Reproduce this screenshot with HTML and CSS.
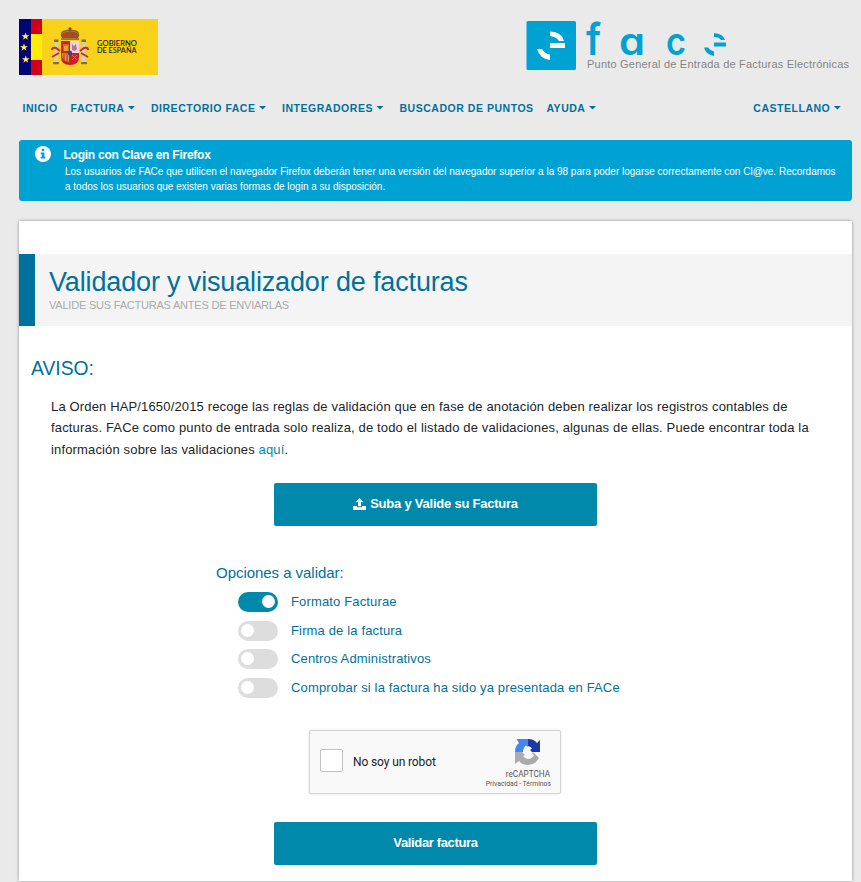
FILE: index.html
```html
<!DOCTYPE html>
<html lang="es">
<head>
<meta charset="utf-8">
<title>FACe - Validador y visualizador de facturas</title>
<link rel="stylesheet" href="styles.css">
</head>
<body>
<header class="brand">
  <svg class="gob" width="139" height="56" viewBox="0 0 139 56" role="img" aria-label="Gobierno de España">
    <rect width="139" height="56" fill="#f8d21a"/>
    <rect width="12" height="56" fill="#030372"/>
    <rect x="12" width="11" height="56" fill="#d00018"/>
    <rect x="12" y="15" width="11" height="26" fill="#ffee00"/>
    <g fill="#fff04a">
      <path id="star" d="M6.500 13.500l1 2.700h2.900l-2.300 1.700.8 2.900-2.400-1.700-2.400 1.700.8-2.900-2.300-1.700h2.900z"/>
      <use href="#star" x="-1.500" y="11"/>
      <use href="#star" x=".3" y="23"/>
    </g>
    <g>
      <path d="M43 20q-2-6 3-7l5-1 5 1q5 1 3 7z" fill="#b9402c"/>
      <path d="M43 18q-2-5 3-6l5-1 5 1q5 1 3 6M51 11v8M47 12v6M55 12v6" fill="none" stroke="#806319" stroke-width="1.300"/>
      <path d="M51 8v4M49.500 9.500h3" stroke="#76351f"/>
      <path d="M42 19h18v2H42z" fill="#a3792b"/>
      <path d="M42 22h18v16q0 8-9 8t-9-8z" fill="#c9202e"/>
      <path d="M51 22h9v12h-9z" fill="#eed9d2"/>
      <path d="M53 25l2 2 2-2 1 5-2 2-3-1z" fill="#ba719b"/>
      <path d="M44.500 25h1v2h1v-2h1v2h1v-2h1v7h-5z" fill="#e4a42b"/>
      <path d="M43 34h7v9q-7-1-7-7z" fill="#d6a12e"/>
      <path d="M45 34v8M48 34v9" stroke="#be2431"/>
      <path d="M53 36l5 5M58 36l-5 5" stroke="#c58423"/>
      <ellipse cx="51" cy="34" rx="2.200" ry="2.600" fill="#324989"/>
      <path d="M35.500 23h3.500v21h-3.500zM63 23h3.500v21H63z" fill="#d3cfc0"/>
      <path d="M35 20.500h4.500v2.500H35zM62.500 20.500H67v2.500h-4.500zM34 43h6v2.200h-6zM62 43h6v2.200h-6z" fill="#897025"/>
      <path d="M33 31q0-3 4-2l4 3M33 38l7-4M69 31q0-3-4-2l-4 3M69 38l-7-4" fill="none" stroke="#c52a32" stroke-width="2"/>
    </g>
    <g class="gob-text"><text x="78" y="27.300" textLength="40" lengthAdjust="spacingAndGlyphs">GOBIERNO</text><text x="78" y="34.300" textLength="39.500" lengthAdjust="spacingAndGlyphs">DE ESPAÑA</text></g>
  </svg>
  <svg class="face" width="326" height="54" viewBox="0 0 326 54" role="img" aria-label="FACe">
    <rect x=".5" y="1" width="49.500" height="49" rx="1.500" fill="#00a2d4"/>
    <path d="M24 11.500q12 .5 14 9.500h-5q-2-4-9-5zM24 23h15v5H24zM11 29h5q3 5 8 5.500v5.500q-10-1-13-11z" fill="#fff"/>
    <g class="face-letters">
      <text x="60" y="35" font-size="43" textLength="15" lengthAdjust="spacingAndGlyphs">f</text>
      <text x="93" y="35" font-size="38" textLength="26" lengthAdjust="spacingAndGlyphs">a</text>
      <text x="140" y="35" font-size="38" textLength="20" lengthAdjust="spacingAndGlyphs">c</text>
    </g>
    <path d="M188 13q9 .5 11 7h-4q-2-3-7-3zM188 22.500h12v4H188zM178 27.500h4q2 3 6 4v4.500q-8-1-10-8.500z" fill="#00a2d4"/>
    <text class="face-tag" x="61" y="48" textLength="262">Punto General de Entrada de Facturas Electrónicas</text>
  </svg>
</header>
<nav class="nav">
  <a>INICIO</a><a class="drop">FACTURA</a><a class="drop">DIRECTORIO FACE</a><a class="drop">INTEGRADORES</a><a>BUSCADOR DE PUNTOS</a><a class="drop">AYUDA</a><a class="drop lang">CASTELLANO</a>
</nav>
<section class="notice">
  <svg width="16" height="16" viewBox="0 0 16 16"><circle cx="8" cy="8" r="8" fill="#fff"/><path d="M6.700 2.800h2.600v2.500H6.700zM5.700 6.500h3.700v4.300h1.100v1.700H5.600v-1.700h1.200V8.200H5.700z" fill="#00a2d4"/></svg>
  <div>
    <h2>Login con Clave en Firefox</h2>
    <p>Los usuarios de FACe que utilicen el navegador Firefox deberán tener una versión del navegador superior a la 98 para poder logarse correctamente con Cl@ve. Recordamos<br>a todos los usuarios que existen varias formas de login a su disposición.</p>
  </div>
</section>
<main class="card">
  <div class="title">
    <h1>Validador y visualizador de facturas</h1>
    <p>VALIDE SUS FACTURAS ANTES DE ENVIARLAS</p>
  </div>
  <h3>AVISO:</h3>
  <p class="text">La Orden HAP/1650/2015 recoge las reglas de validación que en fase de anotación deben realizar los registros contables de<br>facturas. FACe como punto de entrada solo realiza, de todo el listado de validaciones, algunas de ellas. Puede encontrar toda la<br>información sobre las validaciones <a>aquí</a>.</p>
  <button class="btn"><svg width="13" height="12" viewBox="0 0 13 12" fill="#fff"><path d="M6.500 0l4 4.200H8v4H5v-4H2.500zM0 8h4v1.200h5V8h4v4H0z"/></svg>Suba y Valide su Factura</button>
  <section class="options">
    <h4>Opciones a validar:</h4>
    <label><i class="switch on"></i>Formato Facturae</label>
    <label><i class="switch"></i>Firma de la factura</label>
    <label><i class="switch"></i>Centros Administrativos</label>
    <label><i class="switch"></i>Comprobar si la factura ha sido ya presentada en FACe</label>
  </section>
  <div class="captcha">
    <span class="box"></span>
    <span class="robot">No soy un robot</span>
    <div class="rc">
      <svg width="26" height="26" viewBox="0 0 26 26">
        <path d="M25 1v12h-8l-2-2 2-1.500Q16 7.500 13 7V0q6 0 9 4z" fill="#1c3aa9"/>
        <path d="M13 0v8l-2-1.500Q8 9 8 13H0q0-6 4-9L1.500 0z" fill="#4285f4"/>
        <path d="M0 13h7l3 3-2 1q2 3 5 3 4 0 6-4l-2-1.500 1-1.500 6 6q-4 7-11 7-6 0-9-4l-4 3z" fill="#ababab"/>
      </svg>
      <b>reCAPTCHA</b>
      <small>Privacidad - Términos</small>
    </div>
  </div>
  <button class="btn send">Validar factura</button>
</main>
</body>
</html>
```
FILE: styles.css
```css
* { box-sizing: border-box; margin: 0; padding: 0; }
body { height: 882px; padding: 19px 9px 0 19px; overflow: hidden; background: #eaeaea; color: #212529; font-family: "Liberation Sans", Arial, sans-serif; }
svg { display: block; flex: none; }
h1, h2, h3, h4 { font-weight: 400; }
.brand { display: flex; justify-content: space-between; height: 56px; }
.brand .face { margin: 1px 0 0; }
.gob-text { font: 600 7px Lato, sans-serif; fill: #29230c; }
.face-letters { font-family: Inter, sans-serif; font-weight: 600; font-feature-settings: "cv11"; fill: #00a2d4; }
.face-tag { font-size: 11px; fill: #858585; }
.nav { display: flex; gap: 12.800px; height: 65px; padding: 26px 8px 0 3.500px; color: #00719d; font-size: 10.500px; font-weight: 700; line-height: 14px; letter-spacing: .53px; white-space: nowrap; }
.drop::after { content: ""; display: inline-block; width: 8px; height: 4px; margin: 0 2.700px 0 3px; vertical-align: 2.500px; background: currentColor; clip-path: polygon(0 0, 100% 0, 50% 100%); }
.lang { margin-left: auto; }
.notice { display: flex; width: 833px; height: 61px; padding: 6px 0 0 16px; border-radius: 3px; background: #00a2d4; color: #fff; }
.notice div { margin-left: 12.500px; padding-top: 1px; }
.notice h2 { font-size: 12px; font-weight: 700; line-height: 17px; letter-spacing: -.24px; }
.notice p { padding-left: 1.500px; font-size: 10px; line-height: 15px; white-space: nowrap; }
.card { width: 833px; height: 660px; margin-top: 20px; padding-top: 33px; background: #fff; box-shadow: 0 0 3px rgba(0,0,0,.4); }
.title { height: 72px; padding: 12px 0 0 14px; border-left: 16px solid #00719d; background: #f4f4f4; }
.title h1 { color: #00719d; font-size: 27px; line-height: 32px; letter-spacing: -.15px; }
.title p { color: #aaa; font-size: 11px; line-height: 14px; letter-spacing: -.21px; }
.card h3 { margin: 31px 0 0 12px; color: #00719d; font-size: 19.300px; line-height: 24px; }
.text { margin: 15px 0 0 32px; font-size: 13px; line-height: 21.400px; letter-spacing: .15px; white-space: nowrap; }
.text a { color: #0089aa; }
.btn { display: flex; align-items: center; justify-content: center; gap: 4px; width: 323px; height: 43px; margin: 22.800px 0 0 255px; padding-bottom: 2px; border: 0; border-radius: 2px; background: #0089aa; color: #fff; font: 700 13px "Liberation Sans", sans-serif; letter-spacing: -.23px; }
.options { margin: 37px 0 0 197px; color: #00719d; }
.options h4 { font-size: 15px; line-height: 20px; letter-spacing: -.04px; }
.options label { display: flex; align-items: center; height: 20px; margin: 8.700px 0 0 22px; font-size: 13px; line-height: 16px; letter-spacing: .15px; }
.options h4 + label { margin-top: 9px; }
.switch { width: 40px; height: 20px; margin-right: 13px; padding: 3px; border-radius: 10px; background: #ddd; }
.switch::before { content: ""; display: block; width: 13px; height: 13px; border-radius: 50%; background: #fff; }
.on { background: #0089aa; }
.on::before { margin-left: auto; }
.captcha { display: flex; align-items: center; width: 252px; height: 64px; margin: 32px 0 0 290px; padding: 0 9px 0 10px; border: 1px solid #d3d3d3; border-radius: 2px; background: #f9f9f9; box-shadow: 0 0 3px rgba(0,0,0,.1); font-family: Roboto, sans-serif; color: #222; }
.box { width: 23px; height: 23px; margin-bottom: 3px; border: 1px solid #c1c1c1; border-radius: 2px; background: #fff; }
.robot { margin-left: 10px; font-size: 12px; letter-spacing: -.12px; }
.rc { display: flex; flex-direction: column; align-items: flex-end; margin-left: auto; padding-top: 3px; color: #555; }
.rc svg { margin-right: 10px; }
.rc b { margin: 5px 1px 0 0; font-size: 8.200px; font-weight: 400; line-height: 9px; }
.rc small { font-size: 6.800px; line-height: 10px; white-space: nowrap; }
.send { margin-top: 28px; letter-spacing: -.35px; }
```
